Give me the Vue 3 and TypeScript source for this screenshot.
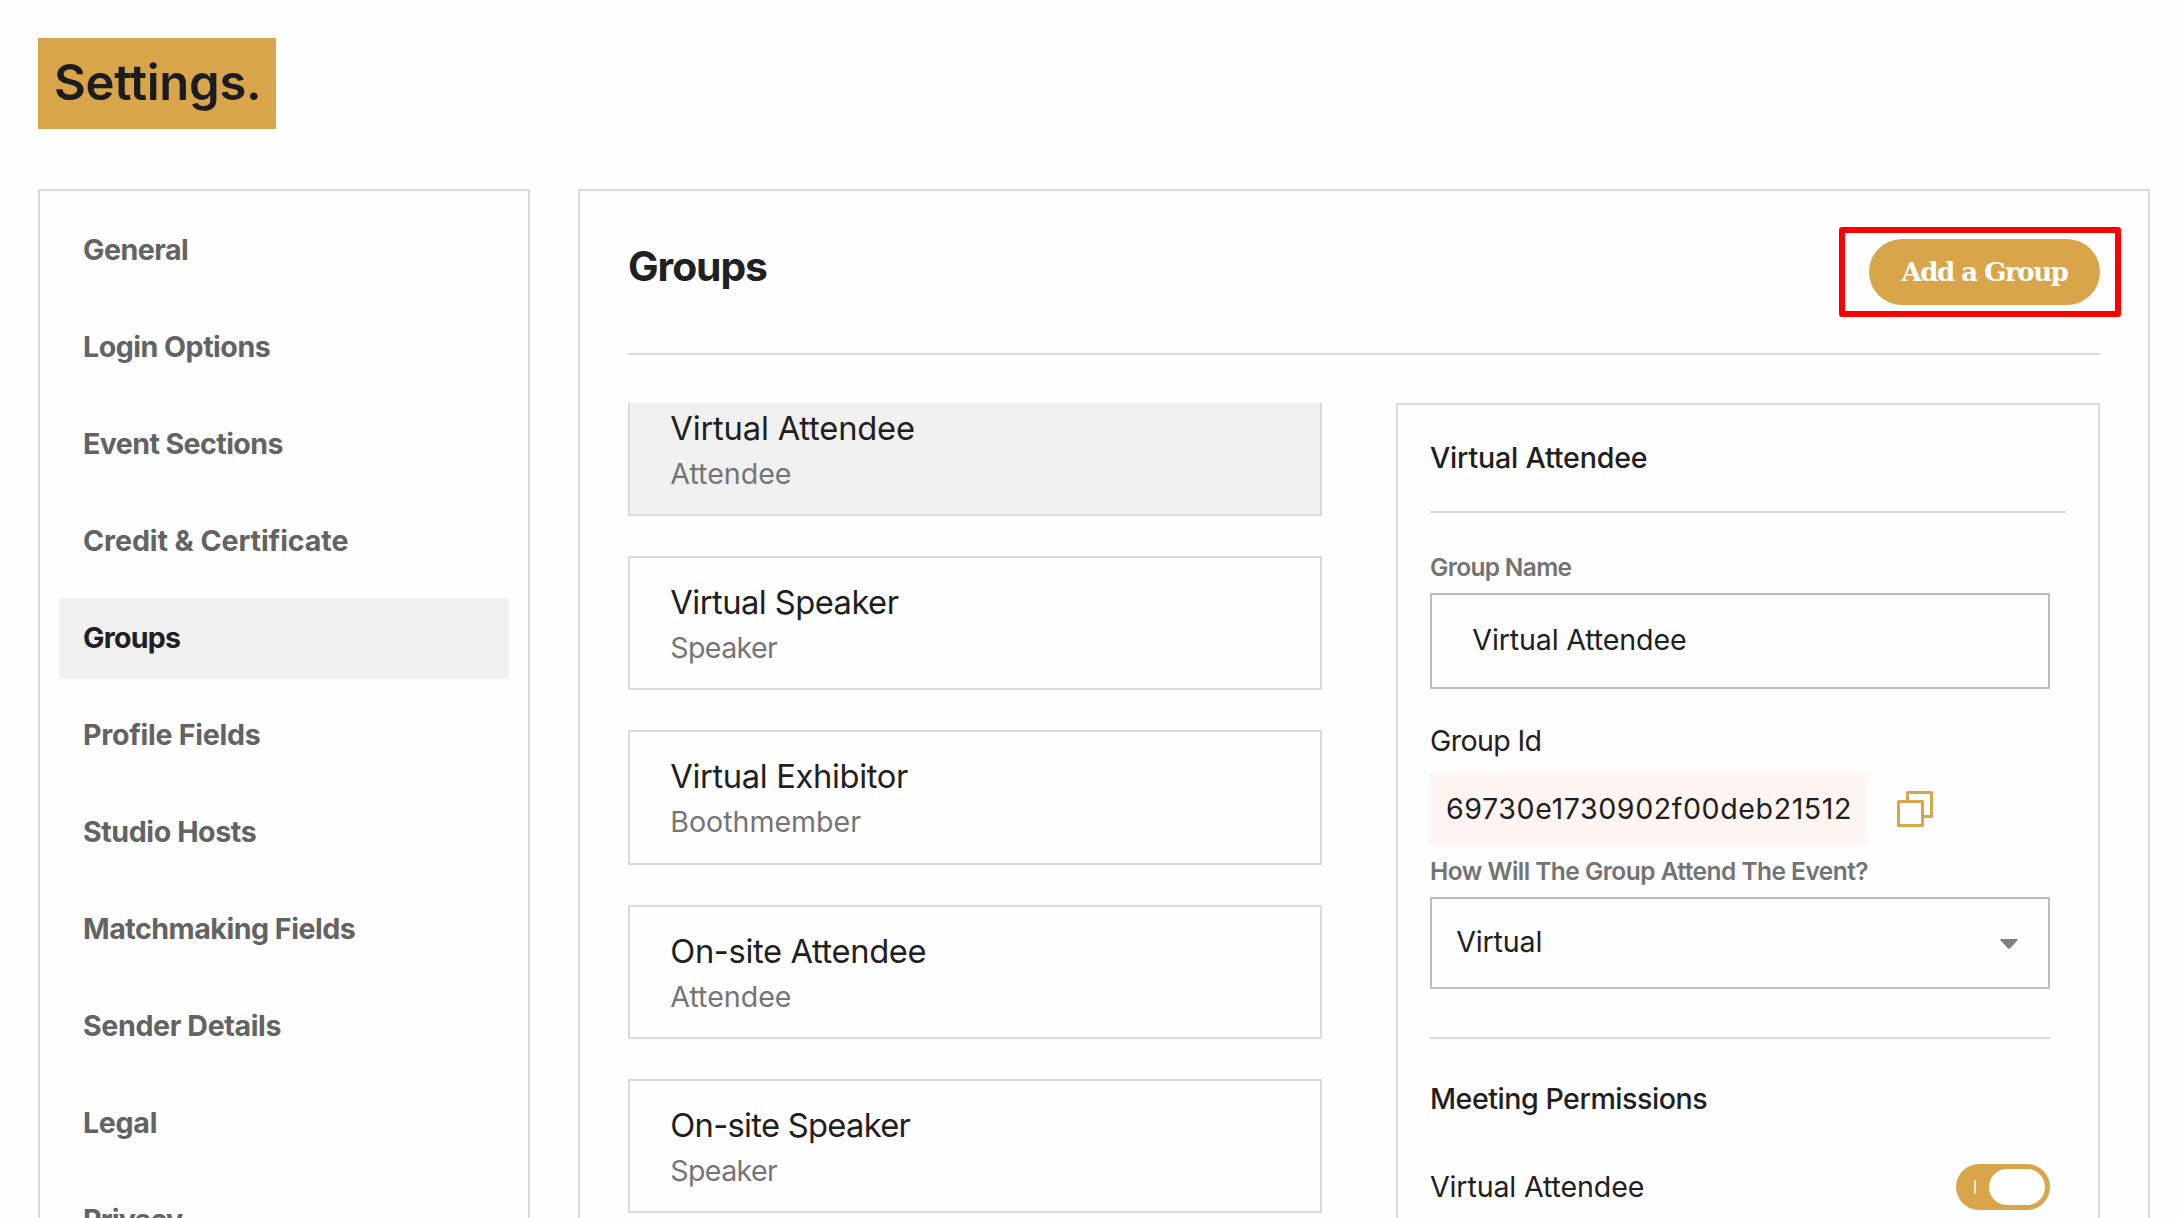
<script setup lang="ts">
import { ref } from 'vue'

interface NavItem {
  label: string
  tracking: number
}

interface Group {
  name: string
  role: string
  nameTracking: number
  roleTracking: number
}

const navItems: NavItem[] = [
  { label: 'General', tracking: -0.51 },
  { label: 'Login Options', tracking: -0.5 },
  { label: 'Event Sections', tracking: -0.6 },
  { label: 'Credit & Certificate', tracking: -0.08 },
  { label: 'Groups', tracking: -0.73 },
  { label: 'Profile Fields', tracking: -0.27 },
  { label: 'Studio Hosts', tracking: -0.42 },
  { label: 'Matchmaking Fields', tracking: -0.49 },
  { label: 'Sender Details', tracking: -0.38 },
  { label: 'Legal', tracking: -0.3 },
  { label: 'Privacy', tracking: -0.8 },
]

const groups: Group[] = [
  { name: 'Virtual Attendee', role: 'Attendee', nameTracking: -0.18, roleTracking: -0.02 },
  { name: 'Virtual Speaker', role: 'Speaker', nameTracking: -0.53, roleTracking: -0.65 },
  { name: 'Virtual Exhibitor', role: 'Boothmember', nameTracking: -0.36, roleTracking: -0.03 },
  { name: 'On-site Attendee', role: 'Attendee', nameTracking: -0.37, roleTracking: -0.02 },
  { name: 'On-site Speaker', role: 'Speaker', nameTracking: -0.71, roleTracking: -0.65 },
]

const activeNav = ref('Groups')
const selected = ref(0)
const canMeet = ref(true)

const tracking = (px: number) => ({ letterSpacing: `${px}px` })
</script>

<template>
  <div class="page">
    <h1 class="page-title">Settings.</h1>

    <div class="columns">
      <nav class="sidebar">
        <a
          v-for="item in navItems"
          :key="item.label"
          class="nav-item"
          :class="{ active: item.label === activeNav }"
          :style="tracking(item.tracking)"
          @click="activeNav = item.label"
        >{{ item.label }}</a>
      </nav>

      <main class="main">
        <header class="main-header">
          <h2 class="main-title">Groups</h2>
          <div class="add-wrap">
            <button class="add-button" type="button">Add a Group</button>
            <span class="highlight"></span>
          </div>
        </header>

        <div class="body">
          <div class="list">
            <div
              v-for="(group, i) in groups"
              :key="group.name"
              class="card"
              :class="{ selected: i === selected }"
              @click="selected = i"
            >
              <div class="card-name" :style="tracking(group.nameTracking)">{{ group.name }}</div>
              <div class="card-role" :style="tracking(group.roleTracking)">{{ group.role }}</div>
            </div>
          </div>

          <section class="panel">
            <h3 class="panel-title">Virtual Attendee</h3>

            <div class="label name-label">Group Name</div>
            <div class="field text-field">Virtual Attendee</div>

            <div class="id-label">Group Id</div>
            <div class="id-row">
              <div class="id-value">69730e1730902f00deb21512</div>
              <svg class="copy" width="36" height="36" viewBox="0 0 36 36" fill="none">
                <path d="M10.5 10.5V1.5H34.5V25.5H25.5" stroke="#d8a54a" stroke-width="3" stroke-linejoin="round" />
                <rect x="1.5" y="10.5" width="24" height="24" stroke="#d8a54a" stroke-width="3" stroke-linejoin="round" />
              </svg>
            </div>

            <div class="label attend-label">How Will The Group Attend The Event?</div>
            <div class="field select-field">
              <span>Virtual</span>
              <svg class="arrow" width="18" height="10" viewBox="0 0 18 10">
                <path d="M1 0H17Q18 0.6 17.4 1.6L10 9.4Q9 10.2 8 9.4L0.6 1.6Q0 0.6 1 0Z" fill="#808080" />
              </svg>
            </div>

            <div class="rule"></div>
            <h4 class="permissions-title">Meeting Permissions</h4>
            <div class="permission">
              <span>Virtual Attendee</span>
              <button class="toggle" :class="{ off: !canMeet }" type="button" @click="canMeet = !canMeet">
                <span class="tick"></span>
                <span class="knob"></span>
              </button>
            </div>
          </section>
        </div>
      </main>
    </div>
  </div>
</template>

<style>
body {
  background: #fefefe;
  overflow: hidden;
}
</style>

<style scoped>
.page {
  box-sizing: border-box;
  height: 1218px;
  padding: 38px 30px 0 38px;
  display: flex;
  flex-direction: column;
  align-items: stretch;
  overflow: hidden;
  font-family: Inter, "Liberation Sans", sans-serif;
  font-size: 28.6px;
  color: #1f2021;
  background: #fefefe;
  white-space: nowrap;
}

h1, h2, h3, h4 {
  margin: 0;
}

button {
  border: 0;
  padding: 0;
  cursor: pointer;
}

.page-title {
  box-sizing: border-box;
  align-self: flex-start;
  width: 238px;
  height: 91px;
  padding-left: 16px;
  background: #d8a54a;
  color: #1c1b20;
  font-size: 49px;
  font-weight: 600;
  line-height: 90px;
  letter-spacing: -0.28px;
}

.columns {
  display: flex;
  gap: 48px;
  margin-top: 60px;
  flex: 1;
  min-height: 0;
}

.sidebar {
  box-sizing: border-box;
  width: 492px;
  flex: none;
  padding: 19px 19px 0;
  border: 2px solid #dadada;
  border-bottom: 0;
  display: flex;
  flex-direction: column;
  gap: 16px;
  overflow: hidden;
}

.nav-item {
  box-sizing: border-box;
  flex: none;
  height: 81px;
  padding-left: 24px;
  line-height: 79px;
  font-weight: 700;
  color: #636363;
  cursor: pointer;
}

.nav-item.active {
  background: #f1f1f1;
  color: #1f2021;
}

.main {
  flex: 1;
  min-width: 0;
  border: 2px solid #dadada;
  border-bottom: 0;
  padding: 0 48px;
  display: flex;
  flex-direction: column;
  overflow: hidden;
}

.main-header {
  box-sizing: border-box;
  flex: none;
  height: 164px;
  padding-top: 48px;
  border-bottom: 2px solid #dadada;
  display: flex;
  justify-content: space-between;
  align-items: flex-start;
}

.main-title {
  font-size: 40.8px;
  font-weight: 700;
  line-height: 55px;
  letter-spacing: -1.05px;
}

.add-wrap {
  position: relative;
}

.add-button {
  display: block;
  width: 231px;
  height: 66px;
  border-radius: 33px;
  background: #d8a54a;
  color: #fff;
  font-family: "DejaVu Serif", serif;
  font-size: 26px;
  font-weight: 700;
  letter-spacing: -1.45px;
}

/* Marker frame that sits around the button */
.highlight {
  position: absolute;
  inset: -12px -21px -12px -30px;
  border: 6px solid #f00;
  border-radius: 3px;
  pointer-events: none;
}

.body {
  flex: 1;
  min-height: 0;
  margin-top: 48px;
  display: flex;
  gap: 74px;
}

.list {
  width: 694px;
  flex: none;
  display: flex;
  flex-direction: column;
  gap: 40px;
  overflow: hidden;
}

.card {
  box-sizing: border-box;
  flex: none;
  height: 134.3px;
  padding: 21.1px 0 0 40.3px;
  border: 2px solid #dadada;
  cursor: pointer;
}

/* The list is scrolled slightly past its first card's top edge */
.card:first-child {
  margin-top: -21.3px;
}

.card.selected {
  background: #f1f1f1;
}

.card-name {
  font-size: 32.7px;
  line-height: 46px;
}

.card-role {
  line-height: 46px;
  color: #757575;
}

.panel {
  flex: 1;
  min-width: 0;
  border: 2px solid #dadada;
  border-bottom: 0;
  padding: 0 32px;
}

.panel-title {
  box-sizing: border-box;
  height: 108px;
  border-bottom: 2px solid #dadada;
  line-height: 105px;
  font-size: 28.6px;
  font-weight: 500;
  letter-spacing: -0.18px;
}

.label {
  font-size: 24.5px;
  font-weight: 600;
  line-height: 32px;
  color: #737373;
}

.name-label {
  margin: 38px 0 10px;
  letter-spacing: -0.68px;
}

.attend-label {
  margin: 10px 0;
  letter-spacing: -0.53px;
}

.field {
  box-sizing: border-box;
  width: 620px;
  border: 2px solid #bebebe;
}

.text-field {
  height: 96px;
  padding-left: 40.3px;
  line-height: 89px;
  letter-spacing: -0.14px;
}

.id-label {
  margin: 32px 0 12px;
  line-height: 40px;
  letter-spacing: -0.62px;
}

.id-row {
  display: flex;
  align-items: center;
  gap: 30px;
}

.id-value {
  box-sizing: border-box;
  width: 437px;
  height: 72px;
  padding-left: 16px;
  background: #fff5f3;
  line-height: 71px;
  letter-spacing: 0.58px;
}

.copy {
  display: block;
}

.select-field {
  height: 92px;
  padding: 0 30px 0 24.3px;
  display: flex;
  align-items: center;
  justify-content: space-between;
  line-height: 36px;
  letter-spacing: -0.18px;
}

.select-field span {
  padding-bottom: 2px;
}

.arrow {
  margin-top: 2px;
}

.rule {
  width: 620px;
  height: 2px;
  margin-top: 48px;
  background: #dadada;
}

.permissions-title {
  margin-top: 40px;
  line-height: 40px;
  font-size: 28.6px;
  font-weight: 500;
  letter-spacing: -0.47px;
}

.permission {
  width: 620px;
  margin-top: 45px;
  display: flex;
  align-items: center;
  justify-content: space-between;
  line-height: 46px;
  letter-spacing: -0.14px;
}

.toggle {
  box-sizing: border-box;
  width: 94px;
  height: 46px;
  padding: 0 5px 0 18px;
  border-radius: 23px;
  background: #d8a54a;
  display: flex;
  align-items: center;
  justify-content: space-between;
}

.toggle.off {
  background: #bebebe;
}

.tick {
  width: 2px;
  height: 14px;
  background: rgba(255, 255, 255, 0.75);
}

.knob {
  width: 56px;
  height: 36px;
  border-radius: 18px;
  background: #fff;
}
</style>
